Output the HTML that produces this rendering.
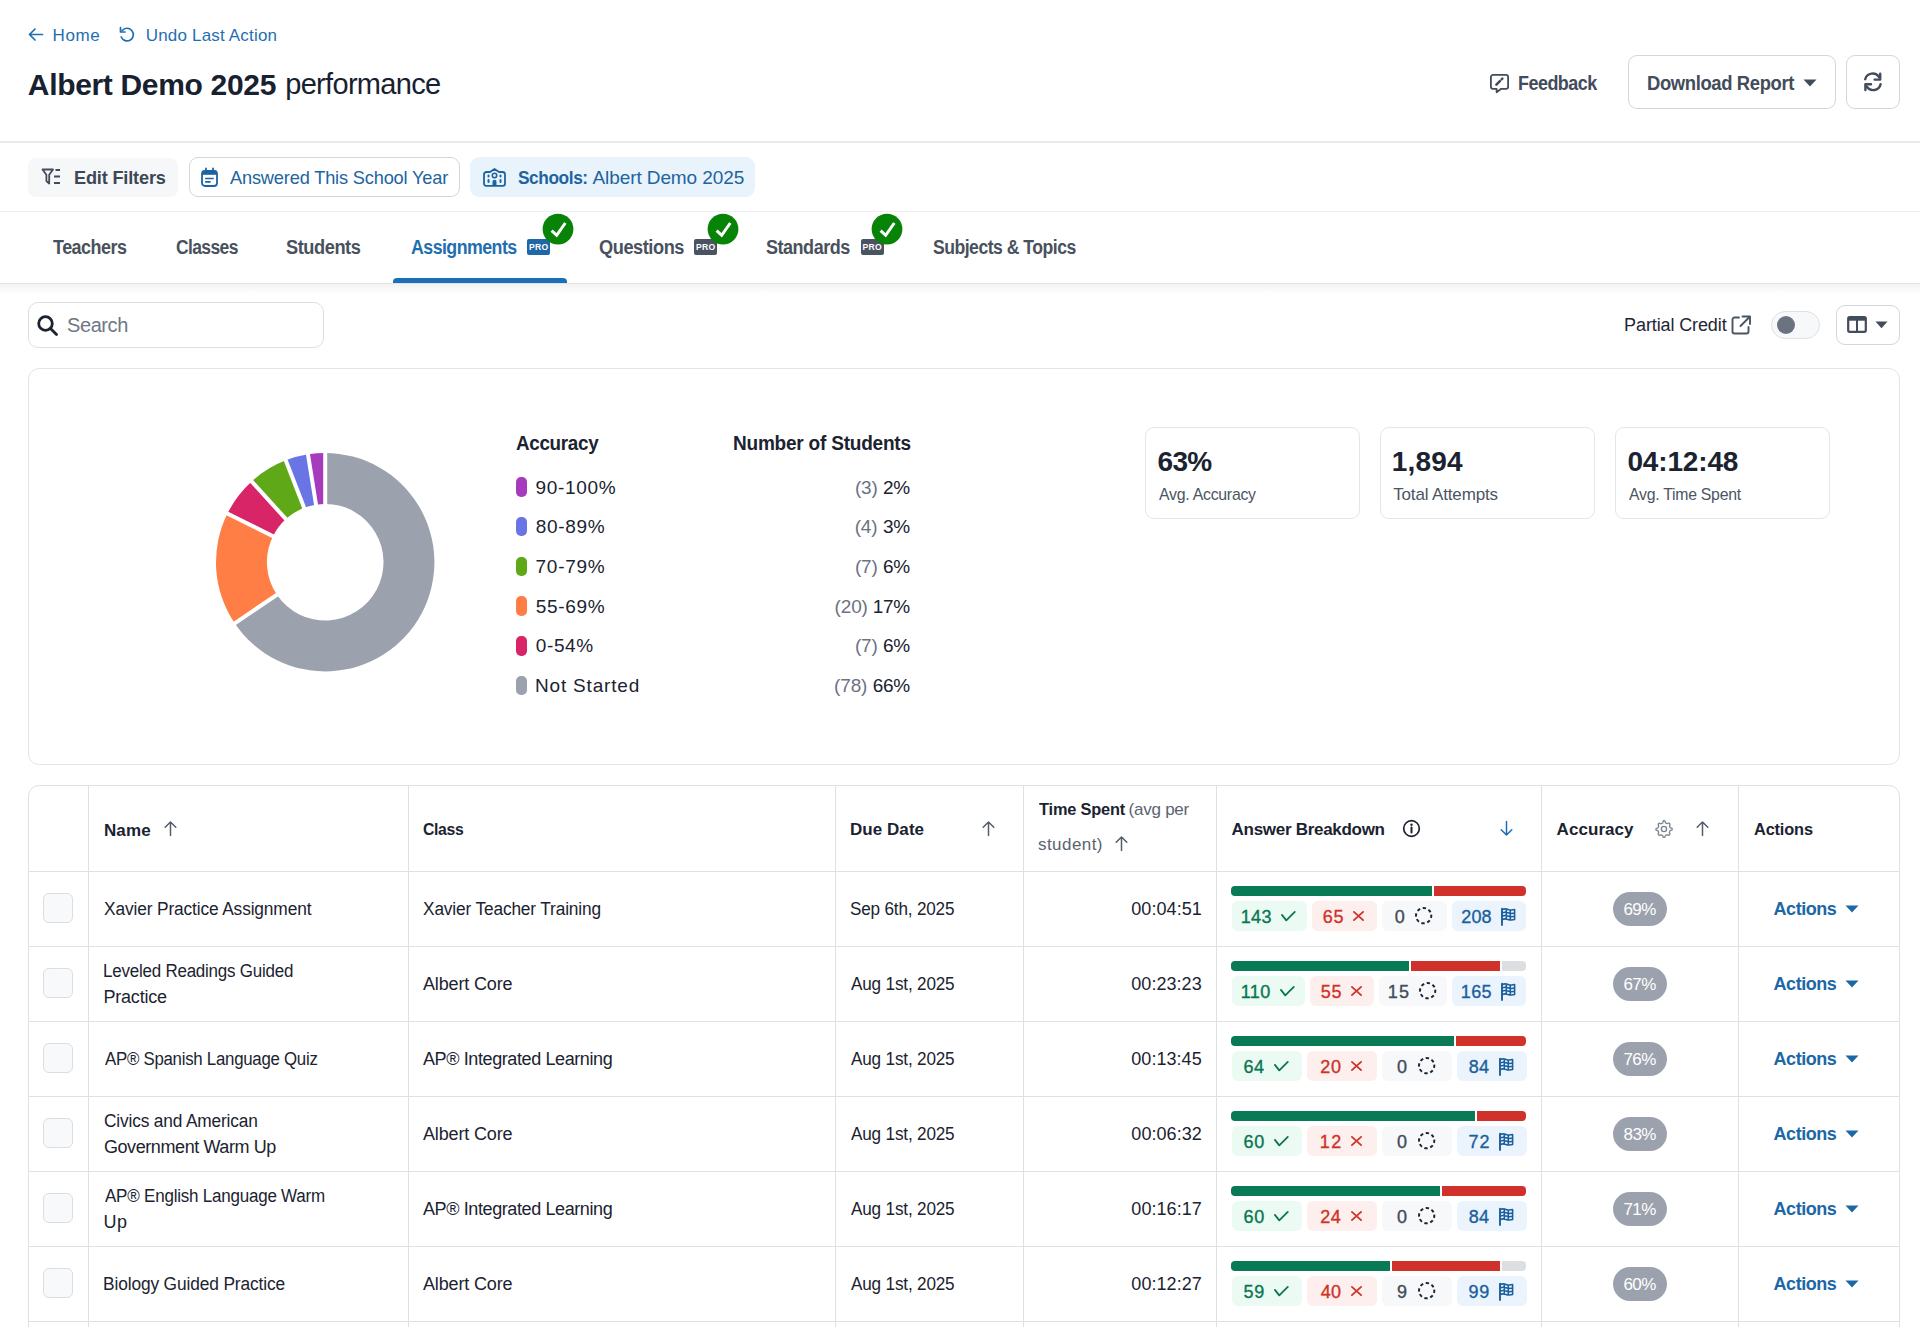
<!DOCTYPE html>
<html><head><meta charset="utf-8"><title>Albert Demo 2025 performance</title>
<style>
html,body{margin:0;padding:0;}
body{width:1920px;height:1327px;overflow:hidden;position:relative;background:#fff;font-family:"Liberation Sans",sans-serif;}
.t{position:absolute;white-space:nowrap;}
.r{position:absolute;}
.s{position:absolute;overflow:visible;}
</style></head><body>
<svg class="s" style="left:27px;top:27px;" width="17" height="15" viewBox="0 0 17 15"><path d="M8 2 L2.5 7.5 L8 13 M2.5 7.5 H15.5" fill="none" stroke="#1f6fb0" stroke-width="1.7" stroke-linecap="round" stroke-linejoin="round"/></svg>
<div class="t" style="left:52.60px;top:26.61px;font-size:17px;line-height:17px;color:#1f6fb0;font-weight:400;letter-spacing:0.600px;">Home</div>
<svg class="s" style="left:118px;top:26px;" width="18" height="17" viewBox="0 0 18 17"><path d="M4.2 4.5 A6.3 6.3 0 1 1 3.2 11" fill="none" stroke="#1f6fb0" stroke-width="1.7" stroke-linecap="round"/><path d="M2.5 1.5 V6 H7" fill="none" stroke="#1f6fb0" stroke-width="1.7" stroke-linecap="round" stroke-linejoin="round"/></svg>
<div class="t" style="left:145.70px;top:26.61px;font-size:17px;line-height:17px;color:#1f6fb0;font-weight:400;letter-spacing:0.187px;">Undo Last Action</div>
<div class="t" style="left:27.80px;top:69.61px;font-size:30px;line-height:30px;color:#17212f;font-weight:700;letter-spacing:-0.327px;">Albert Demo 2025</div>
<div class="t" style="left:285.20px;top:70.45px;font-size:29px;line-height:29px;color:#17212f;font-weight:400;letter-spacing:-0.680px;">performance</div>
<svg class="s" style="left:1489px;top:73px;" width="21" height="21" viewBox="0 0 21 21"><path d="M4 1.9 H17 A2.1 2.1 0 0 1 19.1 4 V13.7 A2.1 2.1 0 0 1 17 15.8 H12.2 L7.6 19.2 V15.8 H4 A2.1 2.1 0 0 1 1.9 13.7 V4 A2.1 2.1 0 0 1 4 1.9 Z" fill="none" stroke="#434c5a" stroke-width="1.8" stroke-linejoin="round"/><path d="M7.4 11.6 L10.9 8.1" stroke="#434c5a" stroke-width="2.6" stroke-linecap="round"/><path d="M12.6 6.4 L13.4 5.6" stroke="#434c5a" stroke-width="2.4" stroke-linecap="round"/></svg>
<div class="t" style="left:1518.33px;top:73.07px;font-size:20px;line-height:20px;color:#434c5a;font-weight:700;letter-spacing:-0.583px;transform:scaleX(0.8984);transform-origin:0 0;">Feedback</div>
<div class="r" style="left:1628px;top:55px;width:208px;height:54px;border:1.5px solid #d3d6dd;border-radius:9px;box-sizing:border-box;background:#fff;"></div>
<div class="t" style="left:1647.30px;top:73.07px;font-size:20px;line-height:20px;color:#434c5a;font-weight:700;letter-spacing:-0.402px;transform:scaleX(0.9218);transform-origin:0 0;">Download Report</div>
<svg class="s" style="left:1803px;top:79px;" width="14" height="8" viewBox="0 0 14 8"><path d="M0.5 0.5 H13.5 L7 7.5 Z" fill="#434c5a"/></svg>
<div class="r" style="left:1846px;top:55px;width:54px;height:54px;border:1.5px solid #d3d6dd;border-radius:9px;box-sizing:border-box;background:#fff;"></div>
<svg class="s" style="left:1862px;top:71px;" width="22" height="22" viewBox="0 0 22 22"><path d="M3.2 8.2 A7.6 7.6 0 0 1 17 6.2" fill="none" stroke="#434c5a" stroke-width="2.4" stroke-linecap="round"/><path d="M18.2 2.8 V8.6 H12.6" fill="none" stroke="#434c5a" stroke-width="2.4" stroke-linecap="round" stroke-linejoin="round"/><path d="M18.6 13.2 A7.6 7.6 0 0 1 4.8 15.6" fill="none" stroke="#434c5a" stroke-width="2.4" stroke-linecap="round"/><path d="M3.4 19 V13.2 H9" fill="none" stroke="#434c5a" stroke-width="2.4" stroke-linecap="round" stroke-linejoin="round"/></svg>
<div class="r" style="left:0px;top:141px;width:1920px;height:2px;background:#e7e9ed;"></div>
<div class="r" style="left:28px;top:158px;width:150px;height:39px;background:#f6f7f9;border-radius:8px;"></div>
<svg class="s" style="left:41px;top:168px;" width="22" height="19" viewBox="0 0 22 19"><path d="M1.5 1.5 H12 L8.2 6.8 V15.5 L5.4 13 V6.8 Z" fill="none" stroke="#434c5a" stroke-width="1.8" stroke-linejoin="round"/><path d="M14.5 2 H19 M13 8.5 H19 M13 15 H19" stroke="#434c5a" stroke-width="1.8"/></svg>
<div class="t" style="left:73.65px;top:168.12px;font-size:19px;line-height:19px;color:#3d4756;font-weight:700;letter-spacing:-0.173px;transform:scaleX(0.9544);transform-origin:0 0;">Edit Filters</div>
<div class="r" style="left:189px;top:157px;width:271px;height:40px;border:1.5px solid #d3d6dd;border-radius:9px;box-sizing:border-box;background:#fff;"></div>
<svg class="s" style="left:200px;top:167px;" width="19" height="21" viewBox="0 0 19 21"><rect x="2" y="3.8" width="15" height="15.2" rx="3" fill="none" stroke="#1d64a0" stroke-width="1.8"/><rect x="2" y="3.8" width="15" height="4" fill="#1d64a0"/><path d="M6 1.5 V4.5 M13 1.5 V4.5" stroke="#1d64a0" stroke-width="1.8" stroke-linecap="round"/><path d="M5.8 11.5 H13 M5.8 14.8 H10" stroke="#1d64a0" stroke-width="1.7" stroke-linecap="round"/></svg>
<div class="t" style="left:230.00px;top:168.42px;font-size:19px;line-height:19px;color:#1d64a0;font-weight:400;letter-spacing:-0.175px;transform:scaleX(0.9582);transform-origin:0 0;">Answered This School Year</div>
<div class="r" style="left:470px;top:157px;width:285px;height:40px;background:#e9f3fc;border-radius:9px;"></div>
<svg class="s" style="left:482px;top:166px;" width="25" height="22" viewBox="0 0 25 22"><path d="M2 8.5 A2.5 2.5 0 0 1 4.5 6 H8 L12.5 3 L17 6 H20.5 A2.5 2.5 0 0 1 23 8.5 V17.8 A2 2 0 0 1 21 19.8 H4 A2 2 0 0 1 2 17.8 Z" fill="none" stroke="#1d64a0" stroke-width="1.8" stroke-linejoin="round"/><circle cx="12.5" cy="9.5" r="2.2" fill="none" stroke="#1d64a0" stroke-width="1.6"/><path d="M10.5 19.8 V15.8 A2 2 0 0 1 14.5 15.8 V19.8 Z" fill="#1d64a0"/><path d="M6.5 9.5 V10.5 M6.5 14 V16 M18.5 9.5 V10.5 M18.5 14 V16" stroke="#1d64a0" stroke-width="2" stroke-linecap="round"/></svg>
<div class="t" style="left:518.05px;top:168.42px;font-size:19px;line-height:19px;color:#1d64a0;font-weight:700;letter-spacing:-0.445px;transform:scaleX(0.9092);transform-origin:0 0;">Schools:</div>
<div class="t" style="left:592.50px;top:168.42px;font-size:19px;line-height:19px;color:#1d64a0;font-weight:400;letter-spacing:-0.093px;">Albert Demo 2025</div>
<div class="r" style="left:0px;top:211px;width:1920px;height:1px;background:#eceef1;"></div>
<div class="t" style="left:53.32px;top:237.47px;font-size:20px;line-height:20px;color:#48515d;font-weight:700;letter-spacing:-0.556px;transform:scaleX(0.8967);transform-origin:0 0;">Teachers</div>
<div class="t" style="left:175.80px;top:237.47px;font-size:20px;line-height:20px;color:#48515d;font-weight:700;letter-spacing:-0.694px;transform:scaleX(0.8735);transform-origin:0 0;">Classes</div>
<div class="t" style="left:286.45px;top:237.47px;font-size:20px;line-height:20px;color:#48515d;font-weight:700;letter-spacing:-0.476px;transform:scaleX(0.9100);transform-origin:0 0;">Students</div>
<div class="t" style="left:410.56px;top:237.47px;font-size:20px;line-height:20px;color:#1f6fb0;font-weight:700;letter-spacing:-0.614px;transform:scaleX(0.8886);transform-origin:0 0;">Assignments</div>
<div class="t" style="left:598.77px;top:237.47px;font-size:20px;line-height:20px;color:#48515d;font-weight:700;letter-spacing:-0.479px;transform:scaleX(0.9094);transform-origin:0 0;">Questions</div>
<div class="t" style="left:766.46px;top:237.47px;font-size:20px;line-height:20px;color:#48515d;font-weight:700;letter-spacing:-0.529px;transform:scaleX(0.9005);transform-origin:0 0;">Standards</div>
<div class="t" style="left:932.97px;top:237.47px;font-size:20px;line-height:20px;color:#48515d;font-weight:700;letter-spacing:-0.569px;transform:scaleX(0.8798);transform-origin:0 0;">Subjects &amp; Topics</div>
<div class="r" style="left:527px;top:239px;width:23px;height:16px;background:#1f67a6;border-radius:2px;"></div>
<div class="t" style="left:527.3px;top:242.2px;width:23px;text-align:center;font-size:8.6px;line-height:10px;font-weight:700;color:#fff;letter-spacing:0.35px;">PRO</div>
<svg class="s" style="left:541.5px;top:213px;" width="32" height="32" viewBox="0 0 32 32"><circle cx="16" cy="16.1" r="15.4" fill="#078307"/><path d="M9.6 17.6 L14.7 22.3 L23.3 10" fill="none" stroke="#fff" stroke-width="3" stroke-linecap="butt" stroke-linejoin="miter"/></svg>
<div class="r" style="left:694px;top:239px;width:23px;height:16px;background:#4a5361;border-radius:2px;"></div>
<div class="t" style="left:694.3px;top:242.2px;width:23px;text-align:center;font-size:8.6px;line-height:10px;font-weight:700;color:#fff;letter-spacing:0.35px;">PRO</div>
<svg class="s" style="left:707px;top:213px;" width="32" height="32" viewBox="0 0 32 32"><circle cx="16" cy="16.1" r="15.4" fill="#078307"/><path d="M9.6 17.6 L14.7 22.3 L23.3 10" fill="none" stroke="#fff" stroke-width="3" stroke-linecap="butt" stroke-linejoin="miter"/></svg>
<div class="r" style="left:860.5px;top:239px;width:23px;height:16px;background:#4a5361;border-radius:2px;"></div>
<div class="t" style="left:860.8px;top:242.2px;width:23px;text-align:center;font-size:8.6px;line-height:10px;font-weight:700;color:#fff;letter-spacing:0.35px;">PRO</div>
<svg class="s" style="left:871px;top:213px;" width="32" height="32" viewBox="0 0 32 32"><circle cx="16" cy="16.1" r="15.4" fill="#078307"/><path d="M9.6 17.6 L14.7 22.3 L23.3 10" fill="none" stroke="#fff" stroke-width="3" stroke-linecap="butt" stroke-linejoin="miter"/></svg>
<div class="r" style="left:0px;top:284px;width:1920px;height:10px;background:linear-gradient(rgba(30,40,60,0.06),rgba(30,40,60,0));"></div>
<div class="r" style="left:0px;top:283px;width:1920px;height:1px;background:#e1e3e8;"></div>
<div class="r" style="left:393px;top:278px;width:174px;height:5px;background:#1a6fb5;border-radius:4px 4px 0 0;"></div>
<div class="r" style="left:28px;top:302px;width:296px;height:46px;border:1.5px solid #dcdfe4;border-radius:10px;box-sizing:border-box;background:#fff;"></div>
<svg class="s" style="left:36px;top:314px;" width="24" height="24" viewBox="0 0 24 24"><circle cx="9.5" cy="9.5" r="6.8" fill="none" stroke="#1b2330" stroke-width="2.8"/><path d="M14.5 14.5 L20.5 20.5" stroke="#1b2330" stroke-width="2.8" stroke-linecap="round"/></svg>
<div class="t" style="left:67.10px;top:315.07px;font-size:20px;line-height:20px;color:#6f7784;font-weight:400;letter-spacing:-0.440px;">Search</div>
<div class="t" style="left:1624.10px;top:315.76px;font-size:18px;line-height:18px;color:#1e2634;font-weight:400;letter-spacing:-0.115px;">Partial Credit</div>
<svg class="s" style="left:1730px;top:314px;" width="23" height="22" viewBox="0 0 23 22"><path d="M9 3.5 H4.5 A2 2 0 0 0 2.5 5.5 V17.5 A2 2 0 0 0 4.5 19.5 H16.5 A2 2 0 0 0 18.5 17.5 V13" fill="none" stroke="#4b5462" stroke-width="1.9" stroke-linecap="round"/><path d="M12.5 2.5 H20 V10 M20 2.5 L10.5 12" fill="none" stroke="#4b5462" stroke-width="1.9" stroke-linecap="round" stroke-linejoin="round"/></svg>
<div class="r" style="left:1771px;top:311px;width:49px;height:28px;border:1px solid #dde0e5;border-radius:14px;box-sizing:border-box;background:#f7f8fa;"></div>
<div class="r" style="left:1777px;top:316px;width:18px;height:18px;background:#6b7280;border-radius:50%;"></div>
<div class="r" style="left:1836px;top:305px;width:64px;height:40px;border:1.5px solid #d3d6dd;border-radius:9px;box-sizing:border-box;background:#fff;"></div>
<svg class="s" style="left:1847px;top:316px;" width="20" height="17" viewBox="0 0 20 17"><rect x="1.2" y="1.2" width="17.6" height="14.6" rx="1.5" fill="none" stroke="#434c5a" stroke-width="2.2"/><rect x="1.2" y="1.2" width="17.6" height="3.5" fill="#434c5a"/><path d="M10 3 V15.8" stroke="#434c5a" stroke-width="2"/></svg>
<svg class="s" style="left:1875px;top:321px;" width="13" height="8" viewBox="0 0 13 8"><path d="M0.5 0.5 H12.5 L6.5 7.2 Z" fill="#434c5a"/></svg>
<div class="r" style="left:28px;top:368px;width:1872px;height:397px;border:1.5px solid #e1e4e9;border-radius:11px;box-sizing:border-box;background:#fff;"></div>
<svg class="s" style="left:215px;top:452px;" width="222" height="222" viewBox="0 0 222 222"><path d="M110.20 1.00 A109.2 109.2 0 1 1 19.70 171.32 L61.89 142.83 A58.3 58.3 0 1 0 110.20 51.90 Z" fill="#9ca2ad"/><path d="M19.70 171.32 A109.2 109.2 0 0 1 12.45 61.53 L58.01 84.21 A58.3 58.3 0 0 0 61.89 142.83 Z" fill="#fe7e45"/><path d="M12.45 61.53 A109.2 109.2 0 0 1 36.63 29.50 L70.92 67.12 A58.3 58.3 0 0 0 58.01 84.21 Z" fill="#d72567"/><path d="M36.63 29.50 A109.2 109.2 0 0 1 70.75 8.37 L89.14 55.84 A58.3 58.3 0 0 0 70.92 67.12 Z" fill="#5fa817"/><path d="M70.75 8.37 A109.2 109.2 0 0 1 92.98 2.37 L101.00 52.63 A58.3 58.3 0 0 0 89.14 55.84 Z" fill="#6a75e5"/><path d="M92.98 2.37 A109.2 109.2 0 0 1 110.20 1.00 L110.20 51.90 A58.3 58.3 0 0 0 101.00 52.63 Z" fill="#a73bbd"/><path d="M110.20 110.20 L110.20 -4.80" stroke="#fff" stroke-width="4"/><path d="M110.20 110.20 L14.90 174.56" stroke="#fff" stroke-width="4"/><path d="M110.20 110.20 L7.26 58.94" stroke="#fff" stroke-width="4"/><path d="M110.20 110.20 L32.73 25.21" stroke="#fff" stroke-width="4"/><path d="M110.20 110.20 L68.66 2.97" stroke="#fff" stroke-width="4"/><path d="M110.20 110.20 L92.06 -3.36" stroke="#fff" stroke-width="4"/></svg>
<div class="t" style="left:515.53px;top:433.07px;font-size:20px;line-height:20px;color:#1b2330;font-weight:700;letter-spacing:-0.327px;transform:scaleX(0.9413);transform-origin:0 0;">Accuracy</div>
<div class="t" style="left:732.76px;top:433.07px;font-size:20px;line-height:20px;color:#1b2330;font-weight:700;letter-spacing:-0.235px;transform:scaleX(0.9513);transform-origin:0 0;">Number of Students</div>
<div class="r" style="left:516px;top:477.2px;width:10.5px;height:19.5px;background:#a73bbd;border-radius:5px;"></div>
<div class="t" style="left:535.60px;top:477.62px;font-size:19px;line-height:19px;color:#1b2330;font-weight:400;letter-spacing:0.650px;">90-100%</div>
<div class="t" style="left:882.99px;top:477.62px;font-size:19px;line-height:19px;color:#1b2330;font-weight:400;letter-spacing:-0.390px;">2%</div>
<div class="t" style="left:854.90px;top:477.62px;font-size:19px;line-height:19px;color:#6b7280;font-weight:400;letter-spacing:-0.158px;">(3)</div>
<div class="r" style="left:516px;top:516.9px;width:10.5px;height:19.5px;background:#6a75e5;border-radius:5px;"></div>
<div class="t" style="left:535.70px;top:517.32px;font-size:19px;line-height:19px;color:#1b2330;font-weight:400;letter-spacing:0.680px;">80-89%</div>
<div class="t" style="left:882.99px;top:517.32px;font-size:19px;line-height:19px;color:#1b2330;font-weight:400;letter-spacing:-0.393px;">3%</div>
<div class="t" style="left:854.71px;top:517.32px;font-size:19px;line-height:19px;color:#6b7280;font-weight:400;letter-spacing:-0.158px;">(4)</div>
<div class="r" style="left:516px;top:556.6px;width:10.5px;height:19.5px;background:#5fa817;border-radius:5px;"></div>
<div class="t" style="left:535.60px;top:557.02px;font-size:19px;line-height:19px;color:#1b2330;font-weight:400;letter-spacing:0.700px;">70-79%</div>
<div class="t" style="left:882.99px;top:557.02px;font-size:19px;line-height:19px;color:#1b2330;font-weight:400;letter-spacing:-0.390px;">6%</div>
<div class="t" style="left:854.90px;top:557.02px;font-size:19px;line-height:19px;color:#6b7280;font-weight:400;letter-spacing:-0.158px;">(7)</div>
<div class="r" style="left:516px;top:596.3px;width:10.5px;height:19.5px;background:#fe7e45;border-radius:5px;"></div>
<div class="t" style="left:535.80px;top:596.72px;font-size:19px;line-height:19px;color:#1b2330;font-weight:400;letter-spacing:0.660px;">55-69%</div>
<div class="t" style="left:872.64px;top:596.72px;font-size:19px;line-height:19px;color:#1b2330;font-weight:400;letter-spacing:-0.270px;">17%</div>
<div class="t" style="left:834.61px;top:596.72px;font-size:19px;line-height:19px;color:#6b7280;font-weight:400;letter-spacing:-0.158px;">(20)</div>
<div class="r" style="left:516px;top:636.0px;width:10.5px;height:19.5px;background:#d72567;border-radius:5px;"></div>
<div class="t" style="left:535.80px;top:636.42px;font-size:19px;line-height:19px;color:#1b2330;font-weight:400;letter-spacing:0.600px;">0-54%</div>
<div class="t" style="left:882.99px;top:636.42px;font-size:19px;line-height:19px;color:#1b2330;font-weight:400;letter-spacing:-0.390px;">6%</div>
<div class="t" style="left:854.90px;top:636.42px;font-size:19px;line-height:19px;color:#6b7280;font-weight:400;letter-spacing:-0.158px;">(7)</div>
<div class="r" style="left:516px;top:675.7px;width:10.5px;height:19.5px;background:#9ca2ad;border-radius:5px;"></div>
<div class="t" style="left:535.00px;top:676.12px;font-size:19px;line-height:19px;color:#1b2330;font-weight:400;letter-spacing:0.810px;">Not Started</div>
<div class="t" style="left:872.65px;top:676.12px;font-size:19px;line-height:19px;color:#1b2330;font-weight:400;letter-spacing:-0.274px;">66%</div>
<div class="t" style="left:834.12px;top:676.12px;font-size:19px;line-height:19px;color:#6b7280;font-weight:400;letter-spacing:-0.158px;">(78)</div>
<div class="r" style="left:1145px;top:427px;width:215px;height:92px;border:1px solid #e3e6ea;border-radius:9px;box-sizing:border-box;background:#fff;"></div>
<div class="t" style="left:1157.50px;top:448.30px;font-size:28px;line-height:28px;color:#1b2330;font-weight:700;letter-spacing:-0.650px;">63%</div>
<div class="t" style="left:1158.50px;top:486.11px;font-size:17px;line-height:17px;color:#4b5563;font-weight:400;letter-spacing:-0.269px;transform:scaleX(0.9312);transform-origin:0 0;">Avg. Accuracy</div>
<div class="r" style="left:1380px;top:427px;width:215px;height:92px;border:1px solid #e3e6ea;border-radius:9px;box-sizing:border-box;background:#fff;"></div>
<div class="t" style="left:1391.80px;top:448.30px;font-size:28px;line-height:28px;color:#1b2330;font-weight:700;letter-spacing:0.175px;">1,894</div>
<div class="t" style="left:1393.20px;top:486.11px;font-size:17px;line-height:17px;color:#4b5563;font-weight:400;letter-spacing:-0.146px;">Total Attempts</div>
<div class="r" style="left:1615px;top:427px;width:215px;height:92px;border:1px solid #e3e6ea;border-radius:9px;box-sizing:border-box;background:#fff;"></div>
<div class="t" style="left:1627.40px;top:448.30px;font-size:28px;line-height:28px;color:#1b2330;font-weight:700;letter-spacing:-0.157px;">04:12:48</div>
<div class="t" style="left:1628.50px;top:486.11px;font-size:17px;line-height:17px;color:#4b5563;font-weight:400;letter-spacing:-0.273px;transform:scaleX(0.9297);transform-origin:0 0;">Avg. Time Spent</div>
<div class="r" style="left:28px;top:785px;width:1872px;height:600px;border:1.5px solid #dde0e6;border-radius:11px;box-sizing:border-box;background:#fff;"></div>
<div class="r" style="left:88px;top:786px;width:1px;height:560px;background:#dde0e6;"></div>
<div class="r" style="left:408px;top:786px;width:1px;height:560px;background:#dde0e6;"></div>
<div class="r" style="left:835px;top:786px;width:1px;height:560px;background:#dde0e6;"></div>
<div class="r" style="left:1023px;top:786px;width:1px;height:560px;background:#dde0e6;"></div>
<div class="r" style="left:1216px;top:786px;width:1px;height:560px;background:#dde0e6;"></div>
<div class="r" style="left:1541px;top:786px;width:1px;height:560px;background:#dde0e6;"></div>
<div class="r" style="left:1738px;top:786px;width:1px;height:560px;background:#dde0e6;"></div>
<div class="r" style="left:28px;top:871px;width:1872px;height:1px;background:#dde0e6;"></div>
<div class="r" style="left:28px;top:946px;width:1872px;height:1px;background:#dde0e6;"></div>
<div class="r" style="left:28px;top:1021px;width:1872px;height:1px;background:#dde0e6;"></div>
<div class="r" style="left:28px;top:1096px;width:1872px;height:1px;background:#dde0e6;"></div>
<div class="r" style="left:28px;top:1171px;width:1872px;height:1px;background:#dde0e6;"></div>
<div class="r" style="left:28px;top:1246px;width:1872px;height:1px;background:#dde0e6;"></div>
<div class="r" style="left:28px;top:1321px;width:1872px;height:1px;background:#dde0e6;"></div>
<div class="t" style="left:103.90px;top:822.11px;font-size:17px;line-height:17px;color:#1b2330;font-weight:700;letter-spacing:0.133px;">Name</div>
<svg class="s" style="left:162.5px;top:820px;" width="15" height="17" viewBox="0 0 15 17"><path d="M7.5 15.5 V2 M2.2 7.3 L7.5 2 L12.8 7.3" fill="none" stroke="#555d6a" stroke-width="1.5" stroke-linecap="round" stroke-linejoin="round"/></svg>
<div class="t" style="left:422.85px;top:821.11px;font-size:17px;line-height:17px;color:#1b2330;font-weight:700;letter-spacing:-0.350px;transform:scaleX(0.9273);transform-origin:0 0;">Class</div>
<div class="t" style="left:849.90px;top:821.11px;font-size:17px;line-height:17px;color:#1b2330;font-weight:700;letter-spacing:0.071px;">Due Date</div>
<svg class="s" style="left:980.5px;top:820px;" width="15" height="17" viewBox="0 0 15 17"><path d="M7.5 15.5 V2 M2.2 7.3 L7.5 2 L12.8 7.3" fill="none" stroke="#555d6a" stroke-width="1.5" stroke-linecap="round" stroke-linejoin="round"/></svg>
<div class="t" style="left:1038.81px;top:801.11px;font-size:17px;line-height:17px;color:#1b2330;font-weight:700;letter-spacing:-0.170px;transform:scaleX(0.9612);transform-origin:0 0;">Time Spent</div>
<div class="t" style="left:1128.50px;top:801.11px;font-size:17px;line-height:17px;color:#5b6370;font-weight:400;letter-spacing:-0.229px;">(avg per</div>
<div class="t" style="left:1038.00px;top:835.61px;font-size:17px;line-height:17px;color:#5b6370;font-weight:400;letter-spacing:0.443px;">student)</div>
<svg class="s" style="left:1114px;top:834.5px;" width="15" height="17" viewBox="0 0 15 17"><path d="M7.5 15.5 V2 M2.2 7.3 L7.5 2 L12.8 7.3" fill="none" stroke="#555d6a" stroke-width="1.5" stroke-linecap="round" stroke-linejoin="round"/></svg>
<div class="t" style="left:1231.60px;top:821.11px;font-size:17px;line-height:17px;color:#1b2330;font-weight:700;letter-spacing:-0.293px;">Answer Breakdown</div>
<svg class="s" style="left:1402px;top:819px;" width="19" height="19" viewBox="0 0 19 19"><circle cx="9.5" cy="9.5" r="7.8" fill="none" stroke="#1b2330" stroke-width="1.7"/><path d="M9.5 8.5 V13.5" stroke="#1b2330" stroke-width="2" stroke-linecap="round"/><circle cx="9.5" cy="5.8" r="1.2" fill="#1b2330"/></svg>
<svg class="s" style="left:1499px;top:820px;" width="15" height="17" viewBox="0 0 15 17"><path d="M7.5 1.5 V15 M2.2 9.7 L7.5 15 L12.8 9.7" fill="none" stroke="#1f6fb0" stroke-width="1.5" stroke-linecap="round" stroke-linejoin="round"/></svg>
<div class="t" style="left:1556.60px;top:821.11px;font-size:17px;line-height:17px;color:#1b2330;font-weight:700;letter-spacing:0.057px;">Accuracy</div>
<svg class="s" style="left:1654px;top:819px;" width="20" height="20" viewBox="0 0 20 20"><path d="M10 2.2 L11.6 2.4 L12.2 4.4 L13.6 5.2 L15.6 4.6 L16.7 5.8 L16.2 7.8 L16.9 9.3 L18.8 10 L18.8 11.6 L16.8 12.3 L16.1 13.8 L16.7 15.8 L15.5 16.9 L13.5 16.3 L12.1 17.1 L11.5 19 L9.9 19 L9.3 17.1 L7.8 16.4 L5.9 17 L4.8 15.9 L5.4 13.9 L4.7 12.4 L2.7 11.7 L2.7 10.1 L4.7 9.4 L5.4 7.9 L4.8 5.9 L5.9 4.8 L7.9 5.4 L9.4 4.6 Z" fill="none" stroke="#7b8390" stroke-width="1.3" stroke-linejoin="round" transform="translate(-0.7,-0.6)"/><circle cx="10" cy="10" r="2.6" fill="none" stroke="#7b8390" stroke-width="1.4"/></svg>
<svg class="s" style="left:1695px;top:820px;" width="15" height="17" viewBox="0 0 15 17"><path d="M7.5 15.5 V2 M2.2 7.3 L7.5 2 L12.8 7.3" fill="none" stroke="#555d6a" stroke-width="1.5" stroke-linecap="round" stroke-linejoin="round"/></svg>
<div class="t" style="left:1753.62px;top:821.11px;font-size:17px;line-height:17px;color:#1b2330;font-weight:700;letter-spacing:-0.168px;transform:scaleX(0.9620);transform-origin:0 0;">Actions</div>
<div class="r" style="left:43px;top:893px;width:30px;height:30px;border:1.5px solid #dadde2;border-radius:6px;box-sizing:border-box;background:#f8f9fa;"></div>
<div class="t" style="left:104.41px;top:900.06px;font-size:18px;line-height:18px;color:#1b2330;font-weight:400;letter-spacing:-0.142px;transform:scaleX(0.9626);transform-origin:0 0;">Xavier Practice Assignment</div>
<div class="t" style="left:422.62px;top:900.06px;font-size:18px;line-height:18px;color:#1b2330;font-weight:400;letter-spacing:-0.148px;transform:scaleX(0.9600);transform-origin:0 0;">Xavier Teacher Training</div>
<div class="t" style="left:850.24px;top:900.06px;font-size:18px;line-height:18px;color:#1b2330;font-weight:400;letter-spacing:-0.195px;transform:scaleX(0.9514);transform-origin:0 0;">Sep 6th, 2025</div>
<div class="t" style="left:1131.30px;top:900.06px;font-size:18px;line-height:18px;color:#1b2330;font-weight:400;letter-spacing:0.057px;">00:04:51</div>
<div class="r" style="left:1231px;top:886px;width:295px;height:10px;display:flex;gap:2px;border-radius:4px;overflow:hidden;"><div style="flex:202.812 0 0;background:#087a56;"></div><div style="flex:92.188 0 0;background:#d0312a;"></div></div>
<div class="r" style="left:1231.50px;top:901px;width:75.03px;height:30px;background:#ebfbf3;border-radius:6px;"></div>
<div class="t" style="left:1240.70px;top:907.51px;font-size:18px;line-height:18px;color:#0b7552;font-weight:400;letter-spacing:0.416px;-webkit-text-stroke:0.35px #0b7552;">143</div>
<svg class="s" style="left:1279.3315px;top:909px;" width="19" height="15" viewBox="0 0 19 15"><path d="M2.9 5.9 L7.3 11.4 L15.8 2.9" fill="none" stroke="#0b7552" stroke-width="1.8" stroke-linecap="round" stroke-linejoin="round"/></svg>
<div class="r" style="left:1311.53px;top:901px;width:65.02px;height:30px;background:#fcefed;border-radius:6px;"></div>
<div class="t" style="left:1322.78px;top:907.51px;font-size:18px;line-height:18px;color:#cf3228;font-weight:400;letter-spacing:0.821px;-webkit-text-stroke:0.35px #cf3228;">65</div>
<svg class="s" style="left:1351.4012500000001px;top:909px;" width="15" height="14" viewBox="0 0 15 14"><path d="M2.9 2.9 L12.1 11.1 M12.1 2.9 L2.9 11.1" fill="none" stroke="#cf3228" stroke-width="1.8" stroke-linecap="round"/></svg>
<div class="r" style="left:1381.55px;top:901px;width:65.02px;height:30px;background:#f7f8fa;border-radius:6px;"></div>
<div class="t" style="left:1394.65px;top:907.51px;font-size:18px;line-height:18px;color:#434b59;font-weight:400;-webkit-text-stroke:0.35px #434b59;">0</div>
<svg class="s" style="left:1413.4645px;top:905.4px;" width="22" height="22" viewBox="0 0 22 22"><circle cx="10.65" cy="10.65" r="7.65" fill="none" stroke="#1b2533" stroke-width="2" stroke-dasharray="3.3 2.7" transform="rotate(-8 10.65 10.65)"/></svg>
<div class="r" style="left:1451.57px;top:901px;width:74.93px;height:30px;background:#ebf4fc;border-radius:6px;"></div>
<div class="t" style="left:1461.17px;top:907.51px;font-size:18px;line-height:18px;color:#1b5f9d;font-weight:400;letter-spacing:0.216px;-webkit-text-stroke:0.35px #1b5f9d;">208</div>
<svg class="s" style="left:1499.3999999999999px;top:905.8px;" width="19" height="21" viewBox="0 0 19 21"><path d="M3 2.8 V19" fill="none" stroke="#1b5f9d" stroke-width="1.9" stroke-linecap="round"/><path d="M3 3.6 Q6 2.2 9 3.4 Q12 4.6 15.6 3.6 V13.6 Q12 14.6 9 13.4 Q6 12.2 3 13.6 M3 7 Q6 5.6 9 6.8 Q12 8 15.6 7 M3 10.3 Q6 8.9 9 10.1 Q12 11.3 15.6 10.3 M7.3 3.2 V12.8 M11.3 4 V13.9" fill="none" stroke="#1b5f9d" stroke-width="1.6" stroke-linejoin="round"/></svg>
<div class="r" style="left:1613px;top:892px;width:54px;height:34px;background:#9ca2ad;border-radius:17px;"></div>
<div class="t" style="left:1623.38px;top:901.11px;font-size:17px;line-height:17px;color:#fff;font-weight:400;letter-spacing:-0.478px;">69%</div>
<div class="t" style="left:1773.60px;top:900.06px;font-size:18px;line-height:18px;color:#1c67a6;font-weight:700;letter-spacing:-0.483px;">Actions</div>
<svg class="s" style="left:1845px;top:905px;" width="14" height="8" viewBox="0 0 14 8"><path d="M0.5 0.5 H13.5 L7 7.5 Z" fill="#1c67a6"/></svg>
<div class="r" style="left:43px;top:968px;width:30px;height:30px;border:1.5px solid #dadde2;border-radius:6px;box-sizing:border-box;background:#f8f9fa;"></div>
<div class="t" style="left:103.48px;top:962.06px;font-size:18px;line-height:18px;color:#1b2330;font-weight:400;letter-spacing:-0.233px;transform:scaleX(0.9425);transform-origin:0 0;">Leveled Readings Guided</div>
<div class="t" style="left:103.40px;top:988.16px;font-size:18px;line-height:18px;color:#1b2330;font-weight:400;letter-spacing:-0.186px;">Practice</div>
<div class="t" style="left:423.00px;top:975.06px;font-size:18px;line-height:18px;color:#1b2330;font-weight:400;letter-spacing:-0.150px;">Albert Core</div>
<div class="t" style="left:851.00px;top:975.06px;font-size:18px;line-height:18px;color:#1b2330;font-weight:400;letter-spacing:-0.190px;transform:scaleX(0.9526);transform-origin:0 0;">Aug 1st, 2025</div>
<div class="t" style="left:1131.30px;top:975.06px;font-size:18px;line-height:18px;color:#1b2330;font-weight:400;letter-spacing:0.043px;">00:23:23</div>
<div class="r" style="left:1231px;top:961px;width:295px;height:10px;display:flex;gap:2px;border-radius:4px;overflow:hidden;"><div style="flex:180.278 0 0;background:#087a56;"></div><div style="flex:90.139 0 0;background:#d0312a;"></div><div style="flex:24.583 0 0;background:#dcdee2;"></div></div>
<div class="r" style="left:1231.50px;top:976px;width:73.75px;height:30px;background:#ebfbf3;border-radius:6px;"></div>
<div class="t" style="left:1240.70px;top:982.51px;font-size:18px;line-height:18px;color:#0b7552;font-weight:400;letter-spacing:0.424px;-webkit-text-stroke:0.35px #0b7552;">110</div>
<svg class="s" style="left:1278.049px;top:984px;" width="19" height="15" viewBox="0 0 19 15"><path d="M2.9 5.9 L7.3 11.4 L15.8 2.9" fill="none" stroke="#0b7552" stroke-width="1.8" stroke-linecap="round" stroke-linejoin="round"/></svg>
<div class="r" style="left:1310.25px;top:976px;width:63.30px;height:30px;background:#fcefed;border-radius:6px;"></div>
<div class="t" style="left:1320.84px;top:982.51px;font-size:18px;line-height:18px;color:#cf3228;font-weight:400;letter-spacing:0.621px;-webkit-text-stroke:0.35px #cf3228;">55</div>
<svg class="s" style="left:1349.25875px;top:984px;" width="15" height="14" viewBox="0 0 15 14"><path d="M2.9 2.9 L12.1 11.1 M12.1 2.9 L2.9 11.1" fill="none" stroke="#cf3228" stroke-width="1.8" stroke-linecap="round"/></svg>
<div class="r" style="left:1378.55px;top:976px;width:68.02px;height:30px;background:#f7f8fa;border-radius:6px;"></div>
<div class="t" style="left:1387.75px;top:982.51px;font-size:18px;line-height:18px;color:#434b59;font-weight:400;letter-spacing:1.221px;-webkit-text-stroke:0.35px #434b59;">15</div>
<svg class="s" style="left:1416.7685000000001px;top:980.4px;" width="22" height="22" viewBox="0 0 22 22"><circle cx="10.65" cy="10.65" r="7.65" fill="none" stroke="#1b2533" stroke-width="2" stroke-dasharray="3.3 2.7" transform="rotate(-8 10.65 10.65)"/></svg>
<div class="r" style="left:1451.57px;top:976px;width:74.93px;height:30px;background:#ebf4fc;border-radius:6px;"></div>
<div class="t" style="left:1460.77px;top:982.51px;font-size:18px;line-height:18px;color:#1b5f9d;font-weight:400;letter-spacing:0.416px;-webkit-text-stroke:0.35px #1b5f9d;">165</div>
<svg class="s" style="left:1499.4px;top:980.8px;" width="19" height="21" viewBox="0 0 19 21"><path d="M3 2.8 V19" fill="none" stroke="#1b5f9d" stroke-width="1.9" stroke-linecap="round"/><path d="M3 3.6 Q6 2.2 9 3.4 Q12 4.6 15.6 3.6 V13.6 Q12 14.6 9 13.4 Q6 12.2 3 13.6 M3 7 Q6 5.6 9 6.8 Q12 8 15.6 7 M3 10.3 Q6 8.9 9 10.1 Q12 11.3 15.6 10.3 M7.3 3.2 V12.8 M11.3 4 V13.9" fill="none" stroke="#1b5f9d" stroke-width="1.6" stroke-linejoin="round"/></svg>
<div class="r" style="left:1613px;top:967px;width:54px;height:34px;background:#9ca2ad;border-radius:17px;"></div>
<div class="t" style="left:1623.38px;top:976.11px;font-size:17px;line-height:17px;color:#fff;font-weight:400;letter-spacing:-0.478px;">67%</div>
<div class="t" style="left:1773.60px;top:975.06px;font-size:18px;line-height:18px;color:#1c67a6;font-weight:700;letter-spacing:-0.483px;">Actions</div>
<svg class="s" style="left:1845px;top:980px;" width="14" height="8" viewBox="0 0 14 8"><path d="M0.5 0.5 H13.5 L7 7.5 Z" fill="#1c67a6"/></svg>
<div class="r" style="left:43px;top:1043px;width:30px;height:30px;border:1.5px solid #dadde2;border-radius:6px;box-sizing:border-box;background:#f8f9fa;"></div>
<div class="t" style="left:104.80px;top:1050.06px;font-size:18px;line-height:18px;color:#1b2330;font-weight:400;letter-spacing:-0.278px;transform:scaleX(0.9346);transform-origin:0 0;">AP® Spanish Language Quiz</div>
<div class="t" style="left:423.00px;top:1050.06px;font-size:18px;line-height:18px;color:#1b2330;font-weight:400;letter-spacing:-0.395px;">AP® Integrated Learning</div>
<div class="t" style="left:851.00px;top:1050.06px;font-size:18px;line-height:18px;color:#1b2330;font-weight:400;letter-spacing:-0.190px;transform:scaleX(0.9526);transform-origin:0 0;">Aug 1st, 2025</div>
<div class="t" style="left:1131.30px;top:1050.06px;font-size:18px;line-height:18px;color:#1b2330;font-weight:400;letter-spacing:0.043px;">00:13:45</div>
<div class="r" style="left:1231px;top:1036px;width:295px;height:10px;display:flex;gap:2px;border-radius:4px;overflow:hidden;"><div style="flex:224.762 0 0;background:#087a56;"></div><div style="flex:70.238 0 0;background:#d0312a;"></div></div>
<div class="r" style="left:1231.50px;top:1051px;width:70.00px;height:30px;background:#ebfbf3;border-radius:6px;"></div>
<div class="t" style="left:1243.39px;top:1057.51px;font-size:18px;line-height:18px;color:#0b7552;font-weight:400;letter-spacing:0.621px;-webkit-text-stroke:0.35px #0b7552;">64</div>
<svg class="s" style="left:1272.0105px;top:1059px;" width="19" height="15" viewBox="0 0 19 15"><path d="M2.9 5.9 L7.3 11.4 L15.8 2.9" fill="none" stroke="#0b7552" stroke-width="1.8" stroke-linecap="round" stroke-linejoin="round"/></svg>
<div class="r" style="left:1306.50px;top:1051px;width:70.00px;height:30px;background:#fcefed;border-radius:6px;"></div>
<div class="t" style="left:1320.24px;top:1057.51px;font-size:18px;line-height:18px;color:#cf3228;font-weight:400;letter-spacing:0.821px;-webkit-text-stroke:0.35px #cf3228;">20</div>
<svg class="s" style="left:1348.8605px;top:1059px;" width="15" height="14" viewBox="0 0 15 14"><path d="M2.9 2.9 L12.1 11.1 M12.1 2.9 L2.9 11.1" fill="none" stroke="#cf3228" stroke-width="1.8" stroke-linecap="round"/></svg>
<div class="r" style="left:1381.50px;top:1051px;width:70.00px;height:30px;background:#f7f8fa;border-radius:6px;"></div>
<div class="t" style="left:1397.09px;top:1057.51px;font-size:18px;line-height:18px;color:#434b59;font-weight:400;-webkit-text-stroke:0.35px #434b59;">0</div>
<svg class="s" style="left:1415.90525px;top:1055.4px;" width="22" height="22" viewBox="0 0 22 22"><circle cx="10.65" cy="10.65" r="7.65" fill="none" stroke="#1b2533" stroke-width="2" stroke-dasharray="3.3 2.7" transform="rotate(-8 10.65 10.65)"/></svg>
<div class="r" style="left:1456.50px;top:1051px;width:70.00px;height:30px;background:#ebf4fc;border-radius:6px;"></div>
<div class="t" style="left:1468.64px;top:1057.51px;font-size:18px;line-height:18px;color:#1b5f9d;font-weight:400;letter-spacing:0.421px;-webkit-text-stroke:0.35px #1b5f9d;">84</div>
<svg class="s" style="left:1497.0605px;top:1055.8px;" width="19" height="21" viewBox="0 0 19 21"><path d="M3 2.8 V19" fill="none" stroke="#1b5f9d" stroke-width="1.9" stroke-linecap="round"/><path d="M3 3.6 Q6 2.2 9 3.4 Q12 4.6 15.6 3.6 V13.6 Q12 14.6 9 13.4 Q6 12.2 3 13.6 M3 7 Q6 5.6 9 6.8 Q12 8 15.6 7 M3 10.3 Q6 8.9 9 10.1 Q12 11.3 15.6 10.3 M7.3 3.2 V12.8 M11.3 4 V13.9" fill="none" stroke="#1b5f9d" stroke-width="1.6" stroke-linejoin="round"/></svg>
<div class="r" style="left:1613px;top:1042px;width:54px;height:34px;background:#9ca2ad;border-radius:17px;"></div>
<div class="t" style="left:1623.38px;top:1051.11px;font-size:17px;line-height:17px;color:#fff;font-weight:400;letter-spacing:-0.478px;">76%</div>
<div class="t" style="left:1773.60px;top:1050.06px;font-size:18px;line-height:18px;color:#1c67a6;font-weight:700;letter-spacing:-0.483px;">Actions</div>
<svg class="s" style="left:1845px;top:1055px;" width="14" height="8" viewBox="0 0 14 8"><path d="M0.5 0.5 H13.5 L7 7.5 Z" fill="#1c67a6"/></svg>
<div class="r" style="left:43px;top:1118px;width:30px;height:30px;border:1.5px solid #dadde2;border-radius:6px;box-sizing:border-box;background:#f8f9fa;"></div>
<div class="t" style="left:103.94px;top:1112.06px;font-size:18px;line-height:18px;color:#1b2330;font-weight:400;letter-spacing:-0.155px;transform:scaleX(0.9601);transform-origin:0 0;">Civics and American</div>
<div class="t" style="left:103.90px;top:1138.16px;font-size:18px;line-height:18px;color:#1b2330;font-weight:400;letter-spacing:-0.412px;">Government Warm Up</div>
<div class="t" style="left:423.00px;top:1125.06px;font-size:18px;line-height:18px;color:#1b2330;font-weight:400;letter-spacing:-0.150px;">Albert Core</div>
<div class="t" style="left:851.00px;top:1125.06px;font-size:18px;line-height:18px;color:#1b2330;font-weight:400;letter-spacing:-0.190px;transform:scaleX(0.9526);transform-origin:0 0;">Aug 1st, 2025</div>
<div class="t" style="left:1131.30px;top:1125.06px;font-size:18px;line-height:18px;color:#1b2330;font-weight:400;letter-spacing:0.071px;">00:06:32</div>
<div class="r" style="left:1231px;top:1111px;width:295px;height:10px;display:flex;gap:2px;border-radius:4px;overflow:hidden;"><div style="flex:245.833 0 0;background:#087a56;"></div><div style="flex:49.167 0 0;background:#d0312a;"></div></div>
<div class="r" style="left:1231.50px;top:1126px;width:70.00px;height:30px;background:#ebfbf3;border-radius:6px;"></div>
<div class="t" style="left:1243.39px;top:1132.51px;font-size:18px;line-height:18px;color:#0b7552;font-weight:400;letter-spacing:0.821px;-webkit-text-stroke:0.35px #0b7552;">60</div>
<svg class="s" style="left:1272.0105px;top:1134px;" width="19" height="15" viewBox="0 0 19 15"><path d="M2.9 5.9 L7.3 11.4 L15.8 2.9" fill="none" stroke="#0b7552" stroke-width="1.8" stroke-linecap="round" stroke-linejoin="round"/></svg>
<div class="r" style="left:1306.50px;top:1126px;width:70.00px;height:30px;background:#fcefed;border-radius:6px;"></div>
<div class="t" style="left:1319.84px;top:1132.51px;font-size:18px;line-height:18px;color:#cf3228;font-weight:400;letter-spacing:1.421px;-webkit-text-stroke:0.35px #cf3228;">12</div>
<svg class="s" style="left:1348.8605px;top:1134px;" width="15" height="14" viewBox="0 0 15 14"><path d="M2.9 2.9 L12.1 11.1 M12.1 2.9 L2.9 11.1" fill="none" stroke="#cf3228" stroke-width="1.8" stroke-linecap="round"/></svg>
<div class="r" style="left:1381.50px;top:1126px;width:70.00px;height:30px;background:#f7f8fa;border-radius:6px;"></div>
<div class="t" style="left:1397.09px;top:1132.51px;font-size:18px;line-height:18px;color:#434b59;font-weight:400;-webkit-text-stroke:0.35px #434b59;">0</div>
<svg class="s" style="left:1415.90525px;top:1130.4px;" width="22" height="22" viewBox="0 0 22 22"><circle cx="10.65" cy="10.65" r="7.65" fill="none" stroke="#1b2533" stroke-width="2" stroke-dasharray="3.3 2.7" transform="rotate(-8 10.65 10.65)"/></svg>
<div class="r" style="left:1456.50px;top:1126px;width:70.00px;height:30px;background:#ebf4fc;border-radius:6px;"></div>
<div class="t" style="left:1468.44px;top:1132.51px;font-size:18px;line-height:18px;color:#1b5f9d;font-weight:400;letter-spacing:1.021px;-webkit-text-stroke:0.35px #1b5f9d;">72</div>
<svg class="s" style="left:1497.0605px;top:1130.8px;" width="19" height="21" viewBox="0 0 19 21"><path d="M3 2.8 V19" fill="none" stroke="#1b5f9d" stroke-width="1.9" stroke-linecap="round"/><path d="M3 3.6 Q6 2.2 9 3.4 Q12 4.6 15.6 3.6 V13.6 Q12 14.6 9 13.4 Q6 12.2 3 13.6 M3 7 Q6 5.6 9 6.8 Q12 8 15.6 7 M3 10.3 Q6 8.9 9 10.1 Q12 11.3 15.6 10.3 M7.3 3.2 V12.8 M11.3 4 V13.9" fill="none" stroke="#1b5f9d" stroke-width="1.6" stroke-linejoin="round"/></svg>
<div class="r" style="left:1613px;top:1117px;width:54px;height:34px;background:#9ca2ad;border-radius:17px;"></div>
<div class="t" style="left:1623.48px;top:1126.11px;font-size:17px;line-height:17px;color:#fff;font-weight:400;letter-spacing:-0.528px;">83%</div>
<div class="t" style="left:1773.60px;top:1125.06px;font-size:18px;line-height:18px;color:#1c67a6;font-weight:700;letter-spacing:-0.483px;">Actions</div>
<svg class="s" style="left:1845px;top:1130px;" width="14" height="8" viewBox="0 0 14 8"><path d="M0.5 0.5 H13.5 L7 7.5 Z" fill="#1c67a6"/></svg>
<div class="r" style="left:43px;top:1193px;width:30px;height:30px;border:1.5px solid #dadde2;border-radius:6px;box-sizing:border-box;background:#f8f9fa;"></div>
<div class="t" style="left:104.80px;top:1187.06px;font-size:18px;line-height:18px;color:#1b2330;font-weight:400;letter-spacing:-0.238px;transform:scaleX(0.9448);transform-origin:0 0;">AP® English Language Warm</div>
<div class="t" style="left:103.40px;top:1213.16px;font-size:18px;line-height:18px;color:#1b2330;font-weight:400;letter-spacing:0.500px;">Up</div>
<div class="t" style="left:423.00px;top:1200.06px;font-size:18px;line-height:18px;color:#1b2330;font-weight:400;letter-spacing:-0.395px;">AP® Integrated Learning</div>
<div class="t" style="left:851.00px;top:1200.06px;font-size:18px;line-height:18px;color:#1b2330;font-weight:400;letter-spacing:-0.190px;transform:scaleX(0.9526);transform-origin:0 0;">Aug 1st, 2025</div>
<div class="t" style="left:1131.30px;top:1200.06px;font-size:18px;line-height:18px;color:#1b2330;font-weight:400;letter-spacing:0.071px;">00:16:17</div>
<div class="r" style="left:1231px;top:1186px;width:295px;height:10px;display:flex;gap:2px;border-radius:4px;overflow:hidden;"><div style="flex:210.714 0 0;background:#087a56;"></div><div style="flex:84.286 0 0;background:#d0312a;"></div></div>
<div class="r" style="left:1231.50px;top:1201px;width:70.00px;height:30px;background:#ebfbf3;border-radius:6px;"></div>
<div class="t" style="left:1243.39px;top:1207.51px;font-size:18px;line-height:18px;color:#0b7552;font-weight:400;letter-spacing:0.821px;-webkit-text-stroke:0.35px #0b7552;">60</div>
<svg class="s" style="left:1272.0105px;top:1209px;" width="19" height="15" viewBox="0 0 19 15"><path d="M2.9 5.9 L7.3 11.4 L15.8 2.9" fill="none" stroke="#0b7552" stroke-width="1.8" stroke-linecap="round" stroke-linejoin="round"/></svg>
<div class="r" style="left:1306.50px;top:1201px;width:70.00px;height:30px;background:#fcefed;border-radius:6px;"></div>
<div class="t" style="left:1320.24px;top:1207.51px;font-size:18px;line-height:18px;color:#cf3228;font-weight:400;letter-spacing:0.621px;-webkit-text-stroke:0.35px #cf3228;">24</div>
<svg class="s" style="left:1348.8605px;top:1209px;" width="15" height="14" viewBox="0 0 15 14"><path d="M2.9 2.9 L12.1 11.1 M12.1 2.9 L2.9 11.1" fill="none" stroke="#cf3228" stroke-width="1.8" stroke-linecap="round"/></svg>
<div class="r" style="left:1381.50px;top:1201px;width:70.00px;height:30px;background:#f7f8fa;border-radius:6px;"></div>
<div class="t" style="left:1397.09px;top:1207.51px;font-size:18px;line-height:18px;color:#434b59;font-weight:400;-webkit-text-stroke:0.35px #434b59;">0</div>
<svg class="s" style="left:1415.90525px;top:1205.4px;" width="22" height="22" viewBox="0 0 22 22"><circle cx="10.65" cy="10.65" r="7.65" fill="none" stroke="#1b2533" stroke-width="2" stroke-dasharray="3.3 2.7" transform="rotate(-8 10.65 10.65)"/></svg>
<div class="r" style="left:1456.50px;top:1201px;width:70.00px;height:30px;background:#ebf4fc;border-radius:6px;"></div>
<div class="t" style="left:1468.64px;top:1207.51px;font-size:18px;line-height:18px;color:#1b5f9d;font-weight:400;letter-spacing:0.421px;-webkit-text-stroke:0.35px #1b5f9d;">84</div>
<svg class="s" style="left:1497.0605px;top:1205.8px;" width="19" height="21" viewBox="0 0 19 21"><path d="M3 2.8 V19" fill="none" stroke="#1b5f9d" stroke-width="1.9" stroke-linecap="round"/><path d="M3 3.6 Q6 2.2 9 3.4 Q12 4.6 15.6 3.6 V13.6 Q12 14.6 9 13.4 Q6 12.2 3 13.6 M3 7 Q6 5.6 9 6.8 Q12 8 15.6 7 M3 10.3 Q6 8.9 9 10.1 Q12 11.3 15.6 10.3 M7.3 3.2 V12.8 M11.3 4 V13.9" fill="none" stroke="#1b5f9d" stroke-width="1.6" stroke-linejoin="round"/></svg>
<div class="r" style="left:1613px;top:1192px;width:54px;height:34px;background:#9ca2ad;border-radius:17px;"></div>
<div class="t" style="left:1623.38px;top:1201.11px;font-size:17px;line-height:17px;color:#fff;font-weight:400;letter-spacing:-0.478px;">71%</div>
<div class="t" style="left:1773.60px;top:1200.06px;font-size:18px;line-height:18px;color:#1c67a6;font-weight:700;letter-spacing:-0.483px;">Actions</div>
<svg class="s" style="left:1845px;top:1205px;" width="14" height="8" viewBox="0 0 14 8"><path d="M0.5 0.5 H13.5 L7 7.5 Z" fill="#1c67a6"/></svg>
<div class="r" style="left:43px;top:1268px;width:30px;height:30px;border:1.5px solid #dadde2;border-radius:6px;box-sizing:border-box;background:#f8f9fa;"></div>
<div class="t" style="left:103.45px;top:1275.06px;font-size:18px;line-height:18px;color:#1b2330;font-weight:400;letter-spacing:-0.138px;transform:scaleX(0.9632);transform-origin:0 0;">Biology Guided Practice</div>
<div class="t" style="left:423.00px;top:1275.06px;font-size:18px;line-height:18px;color:#1b2330;font-weight:400;letter-spacing:-0.150px;">Albert Core</div>
<div class="t" style="left:851.00px;top:1275.06px;font-size:18px;line-height:18px;color:#1b2330;font-weight:400;letter-spacing:-0.190px;transform:scaleX(0.9526);transform-origin:0 0;">Aug 1st, 2025</div>
<div class="t" style="left:1131.30px;top:1275.06px;font-size:18px;line-height:18px;color:#1b2330;font-weight:400;letter-spacing:0.071px;">00:12:27</div>
<div class="r" style="left:1231px;top:1261px;width:295px;height:10px;display:flex;gap:2px;border-radius:4px;overflow:hidden;"><div style="flex:161.157 0 0;background:#087a56;"></div><div style="flex:109.259 0 0;background:#d0312a;"></div><div style="flex:24.583 0 0;background:#dcdee2;"></div></div>
<div class="r" style="left:1231.50px;top:1276px;width:70.00px;height:30px;background:#ebfbf3;border-radius:6px;"></div>
<div class="t" style="left:1243.59px;top:1282.51px;font-size:18px;line-height:18px;color:#0b7552;font-weight:400;letter-spacing:0.721px;-webkit-text-stroke:0.35px #0b7552;">59</div>
<svg class="s" style="left:1272.0105px;top:1284px;" width="19" height="15" viewBox="0 0 19 15"><path d="M2.9 5.9 L7.3 11.4 L15.8 2.9" fill="none" stroke="#0b7552" stroke-width="1.8" stroke-linecap="round" stroke-linejoin="round"/></svg>
<div class="r" style="left:1306.50px;top:1276px;width:70.00px;height:30px;background:#fcefed;border-radius:6px;"></div>
<div class="t" style="left:1320.74px;top:1282.51px;font-size:18px;line-height:18px;color:#cf3228;font-weight:400;letter-spacing:0.321px;-webkit-text-stroke:0.35px #cf3228;">40</div>
<svg class="s" style="left:1348.8605px;top:1284px;" width="15" height="14" viewBox="0 0 15 14"><path d="M2.9 2.9 L12.1 11.1 M12.1 2.9 L2.9 11.1" fill="none" stroke="#cf3228" stroke-width="1.8" stroke-linecap="round"/></svg>
<div class="r" style="left:1381.50px;top:1276px;width:70.00px;height:30px;background:#f7f8fa;border-radius:6px;"></div>
<div class="t" style="left:1396.99px;top:1282.51px;font-size:18px;line-height:18px;color:#434b59;font-weight:400;-webkit-text-stroke:0.35px #434b59;">9</div>
<svg class="s" style="left:1415.90525px;top:1280.4px;" width="22" height="22" viewBox="0 0 22 22"><circle cx="10.65" cy="10.65" r="7.65" fill="none" stroke="#1b2533" stroke-width="2" stroke-dasharray="3.3 2.7" transform="rotate(-8 10.65 10.65)"/></svg>
<div class="r" style="left:1456.50px;top:1276px;width:70.00px;height:30px;background:#ebf4fc;border-radius:6px;"></div>
<div class="t" style="left:1468.54px;top:1282.51px;font-size:18px;line-height:18px;color:#1b5f9d;font-weight:400;letter-spacing:0.821px;-webkit-text-stroke:0.35px #1b5f9d;">99</div>
<svg class="s" style="left:1497.0605px;top:1280.8px;" width="19" height="21" viewBox="0 0 19 21"><path d="M3 2.8 V19" fill="none" stroke="#1b5f9d" stroke-width="1.9" stroke-linecap="round"/><path d="M3 3.6 Q6 2.2 9 3.4 Q12 4.6 15.6 3.6 V13.6 Q12 14.6 9 13.4 Q6 12.2 3 13.6 M3 7 Q6 5.6 9 6.8 Q12 8 15.6 7 M3 10.3 Q6 8.9 9 10.1 Q12 11.3 15.6 10.3 M7.3 3.2 V12.8 M11.3 4 V13.9" fill="none" stroke="#1b5f9d" stroke-width="1.6" stroke-linejoin="round"/></svg>
<div class="r" style="left:1613px;top:1267px;width:54px;height:34px;background:#9ca2ad;border-radius:17px;"></div>
<div class="t" style="left:1623.38px;top:1276.11px;font-size:17px;line-height:17px;color:#fff;font-weight:400;letter-spacing:-0.478px;">60%</div>
<div class="t" style="left:1773.60px;top:1275.06px;font-size:18px;line-height:18px;color:#1c67a6;font-weight:700;letter-spacing:-0.483px;">Actions</div>
<svg class="s" style="left:1845px;top:1280px;" width="14" height="8" viewBox="0 0 14 8"><path d="M0.5 0.5 H13.5 L7 7.5 Z" fill="#1c67a6"/></svg>
</body></html>
